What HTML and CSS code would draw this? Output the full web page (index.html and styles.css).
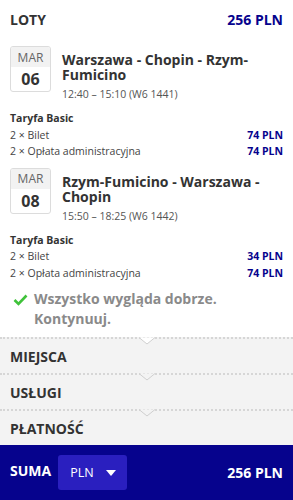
FILE: index.html
```html
<!DOCTYPE html>
<html lang="pl">
<head>
<meta charset="utf-8">
<link rel="stylesheet" href="styles.css">
</head>
<body>
<div class="summary">
  <div class="head">
    <span class="head-title">LOTY</span>
    <span class="head-price">256 PLN</span>
  </div>

  <div class="flight">
    <div class="date"><span class="month">MAR</span><span class="day">06</span></div>
    <div class="info">
      <div class="route">Warszawa - Chopin - Rzym-Fumicino</div>
      <div class="time">12:40 – 15:10 (W6 1441)</div>
    </div>
  </div>
  <div class="fare">
    <div class="fare-name">Taryfa Basic</div>
    <div class="fare-row"><span>2 × Bilet</span><span class="amt">74 PLN</span></div>
    <div class="fare-row"><span>2 × Opłata administracyjna</span><span class="amt">74 PLN</span></div>
  </div>

  <div class="flight">
    <div class="date"><span class="month">MAR</span><span class="day">08</span></div>
    <div class="info">
      <div class="route">Rzym-Fumicino - Warszawa - Chopin</div>
      <div class="time">15:50 – 18:25 (W6 1442)</div>
    </div>
  </div>
  <div class="fare">
    <div class="fare-name">Taryfa Basic</div>
    <div class="fare-row"><span>2 × Bilet</span><span class="amt">34 PLN</span></div>
    <div class="fare-row"><span>2 × Opłata administracyjna</span><span class="amt">74 PLN</span></div>
  </div>

  <div class="ok">
    <svg class="check" width="15" height="12" viewBox="0 0 15 12"><path d="M1.5 6 L5.5 10 L13.5 1.5" fill="none" stroke="#3fc23a" stroke-width="2.6"/></svg>
    <span>Wszystko wygląda dobrze. Kontynuuj.</span>
  </div>

  <div class="steps">
    <div class="step"><svg class="notch notch-first" width="16" height="8" viewBox="0 0 16 8"><path d="M0 0.5 L8 7 L16 0.5" fill="#fff" stroke="#cfcfcf" stroke-width="1"/></svg>MIEJSCA</div>
    <div class="step"><svg class="notch" width="16" height="8" viewBox="0 0 16 8"><path d="M0 0.5 L8 7 L16 0.5" fill="#f3f3f3" stroke="#cfcfcf" stroke-width="1"/></svg>USŁUGI</div>
    <div class="step"><svg class="notch" width="16" height="8" viewBox="0 0 16 8"><path d="M0 0.5 L8 7 L16 0.5" fill="#f3f3f3" stroke="#cfcfcf" stroke-width="1"/></svg>PŁATNOŚĆ</div>
  </div>

  <div class="total">
    <span class="total-label">SUMA</span>
    <div class="currency"><span>PLN</span><svg width="10" height="6" viewBox="0 0 10 6"><path d="M0 0 H10 L5 6 Z" fill="#fff"/></svg></div>
    <span class="total-price">256 PLN</span>
  </div>
</div>
</body>
</html>
```
FILE: styles.css
```css
* { box-sizing: border-box; }
html, body { margin: 0; padding: 0; background: #fff; }
body { font-family: "Open Sans", "Noto Sans", sans-serif; color: #333; }
.summary { width: 293px; height: 500px; display: flex; flex-direction: column; overflow: hidden; }
.head { display: flex; justify-content: space-between; align-items: center; padding: 0 10px; height: 38px; flex: none; }
.head-title { font-weight: 700; font-size: 14px; color: #333; }
.head-price { font-weight: 700; font-size: 14px; color: #06038d; }
.flight { display: flex; gap: 11px; padding: 8px 10px 0 10px; flex: none; }
.date { width: 41px; height: 46px; border: 1px solid #dcdcdc; border-radius: 3px; display: flex; flex-direction: column; flex: none; overflow: hidden; }
.month { height: 20px; background: #f2f2f2; font-size: 12px; color: #666; display: flex; align-items: center; justify-content: center; }
.day { flex: 1; font-weight: 700; font-size: 16px; color: #333; display: flex; align-items: center; justify-content: center; }
.info { padding-top: 6px; }
.route { font-weight: 700; font-size: 14px; line-height: 15px; color: #333; }
.time { font-size: 10.5px; color: #555; margin-top: 5px; line-height: 14px; }
.fare { padding: 9px 10px 0 10px; font-size: 10.5px; line-height: 16.5px; flex: none; }
.fare-name { font-weight: 700; color: #333; }
.fare-row { display: flex; justify-content: space-between; color: #444; }
.amt { font-weight: 700; color: #06038d; }
.ok { display: flex; gap: 6px; padding: 8px 10px 8px 13px; font-weight: 700; font-size: 14px; line-height: 20px; color: #8a8a8a; flex: none; }
.check { margin-top: 5px; flex: none; }
.steps { background: #f3f3f3; flex: none; }
.step { position: relative; height: 36px; border-top: 2px dotted #d6d6d6; display: flex; align-items: center; padding-left: 10px; font-weight: 700; font-size: 14px; color: #333; }
.notch { position: absolute; left: 139px; top: -2px; }
.total { flex: 1; background: #06038d; display: flex; align-items: center; padding: 0 10px; color: #fff; }
.total-label { font-weight: 700; font-size: 14px; margin-right: 7px; margin-top: -5px; }
.currency { width: 69px; height: 35px; background: #2a1fbf; border-radius: 3px; display: flex; align-items: center; justify-content: space-between; padding: 0 11px 0 12px; font-size: 12.5px; }
.total-price { margin-left: auto; font-weight: 700; font-size: 14px; }
```
